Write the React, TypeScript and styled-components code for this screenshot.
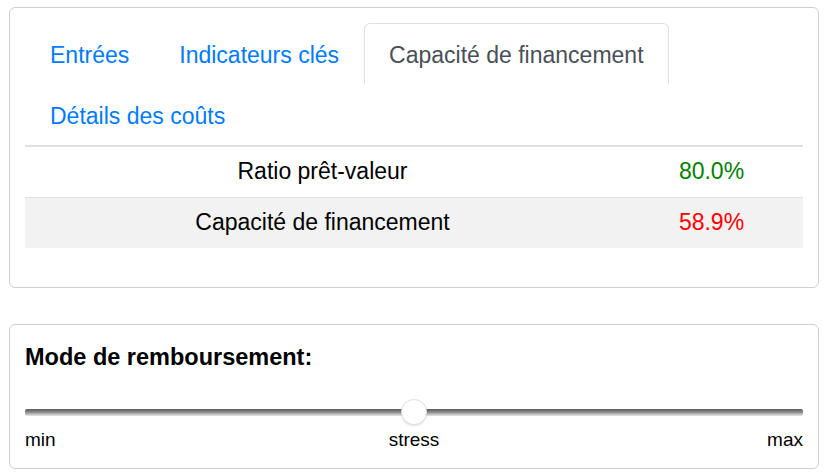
import { useState } from 'react'
import styled, { createGlobalStyle } from 'styled-components'

const tabs = ['Entrées', 'Indicateurs clés', 'Capacité de financement', 'Détails des coûts']

const rows = [
  { label: 'Ratio prêt-valeur', value: '80.0%', good: true },
  { label: 'Capacité de financement', value: '58.9%', good: false },
]

const App = () => {
  const [active, setActive] = useState(2)
  const [mode, setMode] = useState(50)

  return (
    <Page>
      <GlobalStyle />
      <Card>
        <Nav>
          {tabs.map((t, i) => (
            <Tab key={t} active={i === active} onClick={() => setActive(i)}>
              {t}
            </Tab>
          ))}
        </Nav>
        <Table>
          <tbody>
            {rows.map((r, i) => (
              <Row key={r.label} striped={i % 2 === 1}>
                <LabelCell>{r.label}</LabelCell>
                <ValueCell good={r.good}>{r.value}</ValueCell>
              </Row>
            ))}
          </tbody>
        </Table>
      </Card>

      <SliderCard>
        <Title>Mode de remboursement:</Title>
        <Range
          type="range"
          min={0}
          max={100}
          value={mode}
          onChange={(e) => setMode(Number(e.target.value))}
        />
        <Ticks>
          <Tick align="start">min</Tick>
          <Tick align="center">stress</Tick>
          <Tick align="end">max</Tick>
        </Ticks>
      </SliderCard>
    </Page>
  )
}

export default App

const GlobalStyle = createGlobalStyle`
  body {
    margin: 0;
    background: #fff;
    font-family: "Liberation Sans", Arial, Helvetica, sans-serif;
    color: #000;
  }
`

const Page = styled.div`
  padding: 7px 11px 0 9px;
`

const Card = styled.div`
  border: 1px solid #cfcfcf;
  border-radius: 6px;
  padding: 15px 15px 0;
`

const Nav = styled.div`
  display: flex;
  flex-wrap: wrap;
  border-bottom: 2px solid #dee2e6;
`

const Tab = styled.div<{ active: boolean }>`
  font-size: 23px;
  line-height: 33px;
  padding: 15px 24px 11px;
  border: 1px solid ${(p) => (p.active ? '#dee2e6' : 'transparent')};
  border-bottom: 1px solid transparent;
  border-radius: 6px 6px 0 0;
  color: ${(p) => (p.active ? '#495057' : '#007bff')};
  cursor: pointer;
  white-space: nowrap;
`

const Table = styled.table`
  width: 100%;
  border-collapse: collapse;
  margin-bottom: 39px;
`

const Row = styled.tr<{ striped: boolean }>`
  background: ${(p) => (p.striped ? '#f2f2f2' : 'transparent')};
  & + & {
    border-top: 1px solid #dee2e6;
  }
`

const LabelCell = styled.td`
  width: 595px;
  text-align: center;
  font-size: 23px;
  line-height: 33px;
  padding: 8px 0 9px;
`

const ValueCell = styled.td<{ good: boolean }>`
  text-align: center;
  font-size: 23px;
  line-height: 33px;
  padding: 8px 0 9px;
  color: ${(p) => (p.good ? '#008000' : '#ff0000')};
`

const SliderCard = styled(Card)`
  margin-top: 36px;
  padding: 16px 15px 14px;
`

const Title = styled.div`
  font-size: 23.5px;
  line-height: 33px;
  font-weight: bold;
`

const Range = styled.input`
  -webkit-appearance: none;
  appearance: none;
  display: block;
  width: 100%;
  height: 26px;
  margin: 25px 0 0;
  background: transparent;
  outline: none;

  &::-webkit-slider-runnable-track {
    height: 7px;
    border-radius: 2px;
    background: linear-gradient(to bottom, #5a5a5a 0%, #8a8a8a 45%, #c8c8c8 80%, #e6e6e6 100%);
  }

  &::-webkit-slider-thumb {
    -webkit-appearance: none;
    width: 26px;
    height: 26px;
    margin-top: -10px;
    border-radius: 50%;
    background: #fff;
    border: 1px solid #e2e2e2;
    box-shadow: 0 1px 2px rgba(0, 0, 0, 0.12);
  }
`

const Ticks = styled.div`
  display: grid;
  grid-template-columns: 1fr auto 1fr;
  font-size: 19px;
  line-height: 29px;
`

const Tick = styled.span<{ align: 'start' | 'center' | 'end' }>`
  justify-self: ${(p) => p.align};
`
